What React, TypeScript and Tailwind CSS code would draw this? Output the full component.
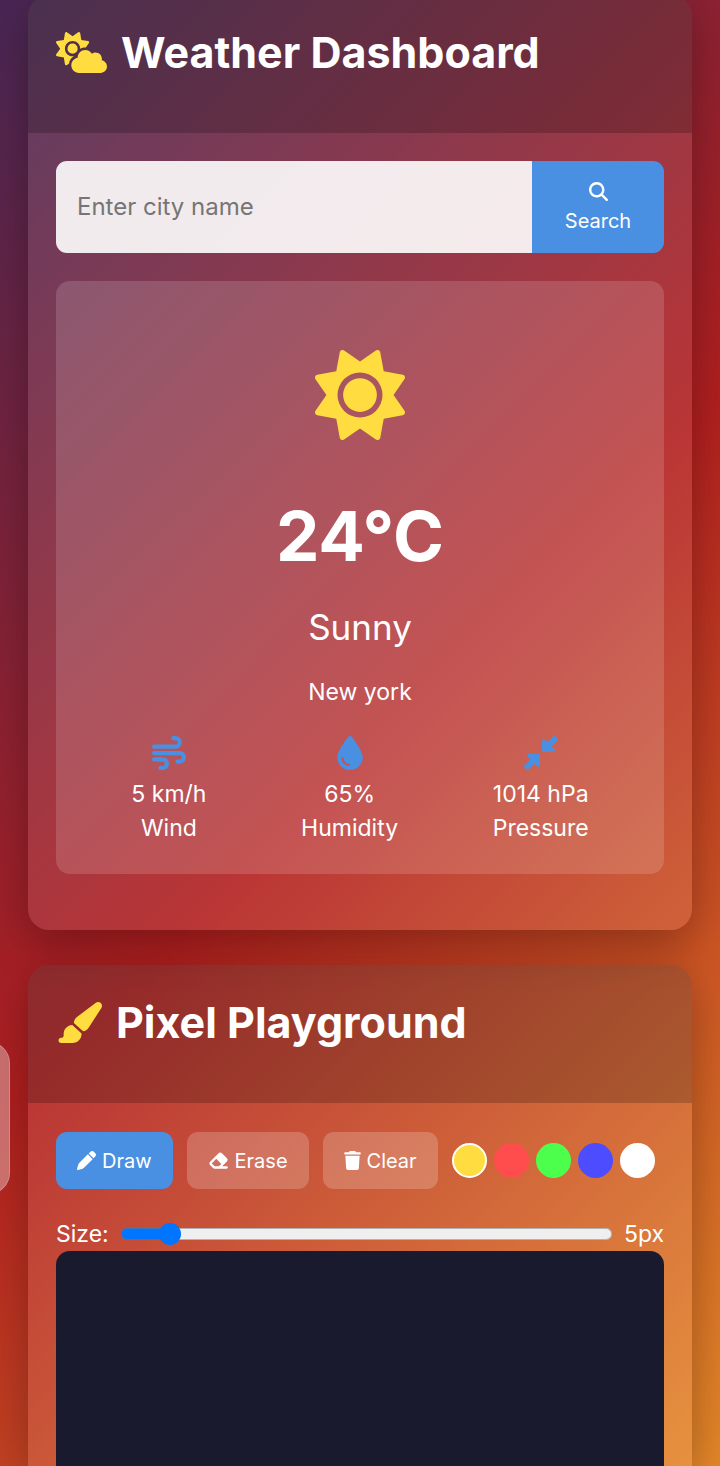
import { useState } from "react";
import type { ReactNode } from "react";
import {
  FaCloudSun,
  FaDownLeftAndUpRightToCenter,
  FaDroplet,
  FaEraser,
  FaMagnifyingGlass,
  FaPaintbrush,
  FaPen,
  FaSun,
  FaTrash,
  FaWind,
} from "react-icons/fa6";

const stats = [
  { label: "Wind", value: "5 km/h", Icon: FaWind },
  { label: "Humidity", value: "65%", Icon: FaDroplet },
  { label: "Pressure", value: "1014 hPa", Icon: FaDownLeftAndUpRightToCenter },
];

const tools = [
  { name: "Draw", icon: <FaPen className="h-[19px] w-[19px]" /> },
  { name: "Erase", icon: <FaEraser className="h-[19px] w-[21px]" /> },
  { name: "Clear", icon: <FaTrash className="h-[19px] w-[17px]" /> },
];

const swatches = [
  { name: "Yellow", fill: "bg-[#ffdc40]" },
  { name: "Red", fill: "bg-[#ff4d4d]" },
  { name: "Green", fill: "bg-[#4dff4d]" },
  { name: "Blue", fill: "bg-[#4d4dff]" },
  { name: "White", fill: "bg-white" },
];

function CardHeader({ icon, title }: { icon: ReactNode; title: string }) {
  return (
    <header className="flex items-center gap-[14px] bg-black/20 px-7 pt-[26px] pb-[49px] text-[#ffdc40]">
      {icon}
      <h2 className="text-[43px] leading-[63px] font-bold text-white">{title}</h2>
    </header>
  );
}

function WeatherCard() {
  return (
    <section className="overflow-hidden rounded-[21px] bg-white/10 shadow-[0_14px_45px_rgba(0,0,0,0.3)]">
      <CardHeader title="Weather Dashboard" icon={<FaCloudSun className="h-[41px] w-[51px]" />} />
      <div className="px-7 pt-7 pb-14">
        <form className="flex h-[92px]" onSubmit={(e) => e.preventDefault()}>
          <input
            type="text"
            aria-label="City name"
            placeholder="Enter city name"
            className="min-w-0 flex-1 rounded-l-[11px] bg-white/90 px-[21px] text-[24px] text-gray-800 outline-none placeholder:text-[#757575]"
          />
          <button
            type="submit"
            className="flex w-[132px] flex-col items-center justify-center gap-[6px] rounded-r-[11px] bg-[#4a90e2] pt-[2px] text-[20px] leading-7"
          >
            <FaMagnifyingGlass className="h-[19px] w-[19px]" />
            Search
          </button>
        </form>

        <div className="mt-7 flex flex-col items-center rounded-[14px] bg-white/15 px-7 pt-[69px] pb-[29px] text-[23px] leading-[34px]">
          <FaSun className="h-[90px] w-[90px] text-[#ffdc40]" />
          <p className="mt-[43px] text-[69px] leading-[106px] font-bold">24°C</p>
          <p className="mt-3 text-[35px] leading-[52px]">Sunny</p>
          <p className="mt-[22px]">New york</p>
          <dl className="mt-[27px] flex w-full justify-around">
            {stats.map(({ label, value, Icon }) => (
              <div key={label} className="flex flex-col-reverse items-center">
                <dt>{label}</dt>
                <dd className="flex flex-col items-center gap-[7px]">
                  <Icon className="h-[34px] w-[34px] text-[#4a90e2]" />
                  {value}
                </dd>
              </div>
            ))}
          </dl>
        </div>
      </div>
    </section>
  );
}

function PixelCard() {
  const [tool, setTool] = useState("Draw");
  const [color, setColor] = useState("Yellow");
  const [size, setSize] = useState(5);
  const ratio = (size - 1) / 49;
  const filled = `calc(${ratio * 100}% + ${11 - 22 * ratio}px)`;

  return (
    <section className="flex flex-1 flex-col overflow-hidden rounded-t-[21px] bg-white/10 shadow-[0_14px_45px_rgba(0,0,0,0.3)]">
      <CardHeader title="Pixel Playground" icon={<FaPaintbrush className="h-[41px] w-[46px]" />} />
      <div className="flex flex-1 flex-col px-7 pt-[29px]">
        <div className="flex flex-wrap items-center gap-[14px]">
          {tools.map(({ name, icon }) => (
            <button
              key={name}
              type="button"
              aria-pressed={tool === name}
              onClick={() => setTool(name)}
              className={`flex h-[57px] items-center gap-[6px] rounded-[11px] px-[21px] text-[20px] ${
                tool === name ? "bg-[#4a90e2]" : "bg-white/20"
              }`}
            >
              {icon}
              {name}
            </button>
          ))}
          <div className="flex gap-[7px]">
            {swatches.map(({ name, fill }) => (
              <button
                key={name}
                type="button"
                aria-label={name}
                aria-pressed={color === name}
                onClick={() => setColor(name)}
                className={`h-[35px] w-[35px] rounded-full border-2 ${fill} ${
                  color === name ? "border-white" : "border-transparent"
                }`}
              />
            ))}
          </div>
        </div>

        <div className="mt-7 flex items-center gap-3 text-[23px] leading-[34px]">
          <label htmlFor="brush-size">Size:</label>
          <input
            id="brush-size"
            type="range"
            min={1}
            max={50}
            value={size}
            onChange={(e) => setSize(Number(e.target.value))}
            style={{ backgroundImage: `linear-gradient(to right, #0075ff ${filled}, #efefef ${filled})` }}
            className="h-3 min-w-0 flex-1 appearance-none rounded-full shadow-[inset_0_0_0_1px_rgba(120,120,120,0.5)] [&::-webkit-slider-runnable-track]:h-3 [&::-webkit-slider-thumb]:-mt-[5px] [&::-webkit-slider-thumb]:h-[22px] [&::-webkit-slider-thumb]:w-[22px] [&::-webkit-slider-thumb]:appearance-none [&::-webkit-slider-thumb]:rounded-full [&::-webkit-slider-thumb]:bg-[#0075ff]"
          />
          <output htmlFor="brush-size">{size}px</output>
        </div>
        <canvas aria-label="Drawing canvas" className="min-h-[215px] w-full flex-1 rounded-t-[14px] bg-[#1a1a2e]" />
      </div>
    </section>
  );
}

export default function App() {
  return (
    <div className="relative h-screen overflow-hidden bg-[linear-gradient(135deg,#1a2a6c_-22%,#b21f1f_51%,#fdbb2d_124%)] font-['Inter','Noto_Sans',sans-serif] text-white">
      <aside
        aria-label="Side menu"
        className="absolute top-[1042px] -left-[70px] h-[152px] w-20 rounded-[21px] border border-white/20 bg-white/35"
      />
      <main className="-mt-[5px] flex h-[calc(100%+5px)] flex-col gap-[35px] px-7">
        <WeatherCard />
        <PixelCard />
      </main>
    </div>
  );
}
